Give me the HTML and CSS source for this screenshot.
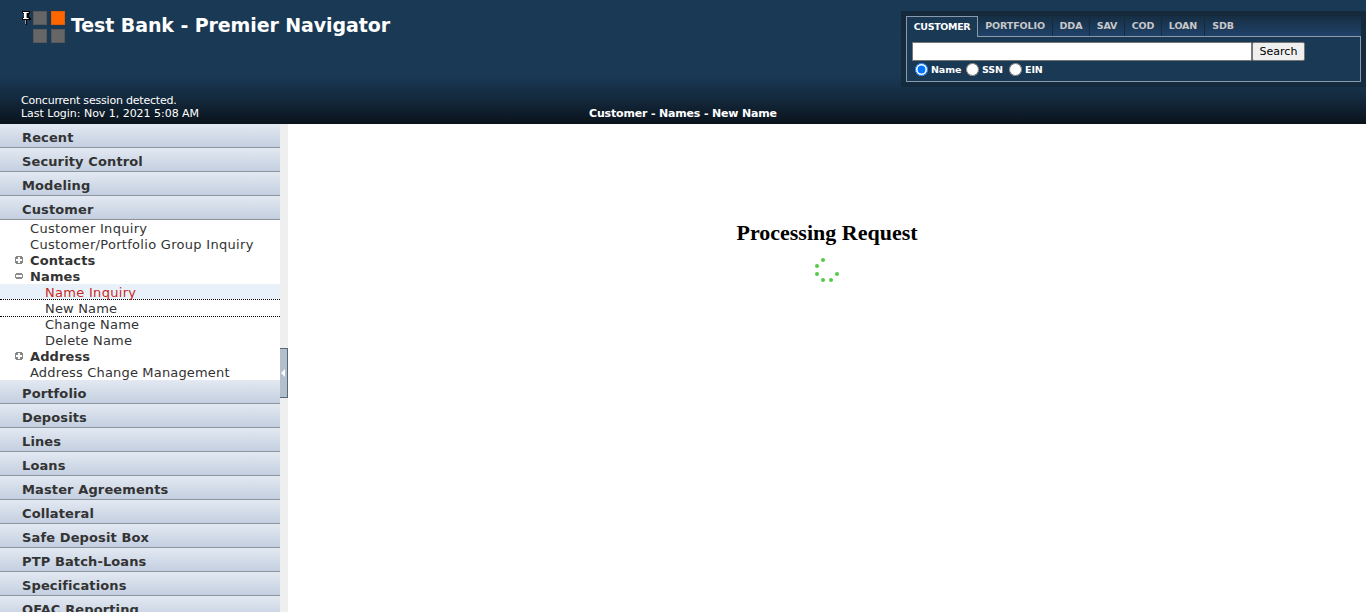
FILE: index.html
```html
<!DOCTYPE html>
<html lang="en">
<head>
<meta charset="utf-8">
<title>Test Bank - Premier Navigator</title>
<link rel="stylesheet" href="styles.css">
</head>
<body>
<header class="header">
  <div class="brand">
    <svg class="pin" width="10" height="15" viewBox="0 0 10 15" shape-rendering="crispEdges"><path fill="#000" d="M1 0h8v3h-1v3h1v1h1v2h-4v5h-1v-5h-4v-2h1v-1h1v-3h-1z"/><path fill="#fff" d="M2 1h5v1h-5zM3 2h2v5h-2zM2 7h5v1h-5z"/><path fill="#999" d="M7 1h1v1h-1zM5 2h1v5h-1zM7 7h1v1h-1zM4 9h1v4h-1z"/></svg>
    <div class="logo"><i></i><i class="hot"></i><i></i><i></i></div>
    <h1 class="title">Test Bank - Premier Navigator</h1>
  </div>
  <div class="status">
    <div class="session"><div class="line1">Concurrent session detected.</div><div class="line2">Last Login: Nov 1, 2021 5:08 AM</div></div>
    <div class="crumb">Customer - Names - New Name</div>
  </div>
  <form class="search">
    <div class="tabs"><span class="tab active">CUSTOMER</span><span class="tab t-portfolio">PORTFOLIO</span><span class="tab t-dda">DDA</span><span class="tab t-sav">SAV</span><span class="tab t-cod">COD</span><span class="tab t-loan">LOAN</span><span class="tab t-sdb">SDB</span></div>
    <div class="panel">
      <div class="query"><input class="field" type="text"><button class="go" type="button">Search</button></div>
      <div class="radios"><input type="radio" name="by" checked><span class="r-name">Name</span><input type="radio" name="by"><span class="r-ssn">SSN</span><input type="radio" name="by"><span>EIN</span></div>
    </div>
  </form>
</header>
<div class="main">
  <nav class="nav">
    <div class="group">Recent</div>
    <div class="group">Security Control</div>
    <div class="group">Modeling</div>
    <div class="group">Customer</div>
    <div class="items">
      <div class="item inquiry">Customer Inquiry</div>
      <div class="item inquiry">Customer/Portfolio Group Inquiry</div>
      <div class="item branch"><svg class="box" width="8" height="8" viewBox="0 0 8 8" shape-rendering="crispEdges"><path fill="#858585" d="M1 0h6v1h1v6h-1v1h-6v-1h-1v-6h1z"/><path fill="#fff" d="M3 1h2v2h2v2h-2v2h-2v-2h-2v-2h2z"/></svg>Contacts</div>
      <div class="item branch"><svg class="box" width="8" height="8" viewBox="0 0 8 8" shape-rendering="crispEdges"><path fill="#8c8c8c" d="M1 1h6v1h1v4h-1v1h-6v-1h-1v-4h1z"/><path fill="#fff" d="M1 3h6v2h-6z"/></svg>Names</div>
      <div class="item leaf inquiry hover">Name Inquiry</div>
      <div class="item leaf current">New Name</div>
      <div class="item leaf">Change Name</div>
      <div class="item leaf">Delete Name</div>
      <div class="item branch"><svg class="box" width="8" height="8" viewBox="0 0 8 8" shape-rendering="crispEdges"><path fill="#858585" d="M1 0h6v1h1v6h-1v1h-6v-1h-1v-6h1z"/><path fill="#fff" d="M3 1h2v2h2v2h-2v2h-2v-2h-2v-2h2z"/></svg>Address</div>
      <div class="item">Address Change Management</div>
    </div>
    <div class="group">Portfolio</div>
    <div class="group">Deposits</div>
    <div class="group">Lines</div>
    <div class="group">Loans</div>
    <div class="group">Master Agreements</div>
    <div class="group">Collateral</div>
    <div class="group">Safe Deposit Box</div>
    <div class="group">PTP Batch-Loans</div>
    <div class="group">Specifications</div>
    <div class="group">OFAC Reporting</div>
  </nav>
  <div class="splitter"><div class="handle"><svg width="5" height="8" viewBox="0 0 5 8"><path fill="#fff" d="M0 4L4 0v8z"/></svg></div></div>
  <main class="content">
    <h2 class="processing">Processing Request</h2>
    <svg class="spinner" width="26" height="26" viewBox="0 0 26 26" fill="#53cb48"><circle cx="9" cy="3" r="2"/><circle cx="3" cy="9" r="2"/><circle cx="3" cy="17" r="2"/><circle cx="9" cy="23" r="2"/><circle cx="17" cy="23" r="2"/><circle cx="25" cy="17" r="2" transform="translate(-2 0)"/></svg>
  </main>
</div>
</body>
</html>
```
FILE: styles.css
```css
* { box-sizing: border-box; }
body { margin: 0; height: 612px; overflow: hidden; background: #fff; font-family: "DejaVu Sans", Verdana, sans-serif; }
.header { display: grid; grid-template-columns: 901px 465px; grid-template-rows: 93px 31px; height: 124px; color: #fff; background: linear-gradient(#1a3955 0 76px, #13283b 100px, #0a131c 124px); }
.brand { display: flex; align-items: flex-start; padding: 11px 0 0 21px; }
.pin { display: block; }
.logo { display: grid; grid-template-columns: 14px 14px; gap: 4px; margin-left: 2px; }
.logo i { height: 14px; background: #666; border: 1px solid #595959; }
.logo .hot { background: #f60; border-color: #e65c00; }
.title { margin: 1px 0 0 6px; font: bold 19px/26px "DejaVu Sans", Verdana, sans-serif; letter-spacing: -.1px; white-space: nowrap; }
.status { grid-column: 1 / 3; grid-row: 2; display: flex; font-size: 11px; line-height: 13px; white-space: nowrap; }
.session { width: 568px; padding: 1px 0 0 21px; }
.line1 { letter-spacing: -.2px; }
.line2 { letter-spacing: -.03px; }
.crumb { margin: 14px 0 0 21px; font-weight: bold; letter-spacing: -.17px; }
.search { grid-column: 2; grid-row: 1; align-self: start; margin: 11px 0 0; height: 76px; padding: 5px; background: linear-gradient(#14293b, #152c41 80%, #142b3e); font: bold 9.5px/13px "DejaVu Sans", Verdana, sans-serif; }
.tabs { display: flex; height: 20px; background: linear-gradient(#162e43, #20436a); }
.tab { height: 20px; line-height: 20px; text-align: center; color: #c8c8c8; border-right: 1px solid #152c40; letter-spacing: -.1px; white-space: nowrap; }
.tab.active { position: relative; width: 72px; height: 21px; border: 1px solid #8a9aab; border-bottom: 0; background: #1a3955; color: #fff; letter-spacing: -.35px; }
.t-portfolio { width: 75px; }
.t-dda { width: 37px; }
.t-sav { width: 35px; }
.t-cod { width: 37px; }
.t-loan { width: 43px; }
.t-sdb { width: 36px; border-right: 0; }
.panel { height: 46px; border: 1px solid #8a9aab; padding: 5px; background: #1a3955; }
.query { display: flex; height: 19px; }
.field { width: 340px; height: 19px; margin: 0; padding: 0; border: 1px solid #767676; background: #fff; }
.go { width: 53px; height: 19px; padding: 0; border: 1px solid #767676; border-radius: 2px; background: #efefef; color: #000; font: 11px/16px "DejaVu Sans", Verdana, sans-serif; }
.radios { display: flex; align-items: center; height: 17px; padding-left: 3px; letter-spacing: -.1px; }
.radios input { width: 13px; height: 13px; margin: 0 3px 0 0; flex: none; }
.radios span { width: 28px; margin-right: 7px; }
.radios .r-name { width: 30px; margin-right: 5px; }
.radios .r-ssn { width: 22px; margin-right: 5px; }
.main { display: flex; height: 488px; }
.nav { width: 280px; overflow: hidden; color: #333; font-size: 13px; white-space: nowrap; }
.group { height: 24px; padding-left: 22px; border-bottom: 1px solid #8e939c; background: linear-gradient(#e3e9f2, #c3cfe0); font-weight: bold; line-height: 27px; letter-spacing: .12px; }
.items { height: 160px; }
.item { height: 16px; padding-left: 30px; line-height: 17px; letter-spacing: .17px; }
.inquiry { letter-spacing: .3px; }
.branch { display: flex; align-items: center; padding-left: 15px; font-weight: bold; letter-spacing: .12px; }
.box { margin-right: 7px; }
.leaf { padding-left: 45px; }
.hover { height: 15px; background: #e8f1f9; color: #c82a1e; }
.current { height: 18px; border-top: 1px dotted #000; border-bottom: 1px dotted #000; line-height: 17px; }
.current + .leaf { height: 15px; line-height: 15px; }
.splitter { width: 8px; background: #efefef; padding-top: 224px; }
.handle { display: flex; align-items: center; height: 50px; padding-left: 1px; border: 1px solid #536879; border-left: 0; background: #b3c0cc; }
.content { flex: 1; display: flex; flex-direction: column; align-items: center; padding-top: 95px; }
.processing { margin: 0; font: bold 22px/27px "Liberation Serif", serif; color: #000; }
.spinner { display: block; margin-top: 11px; }
```
